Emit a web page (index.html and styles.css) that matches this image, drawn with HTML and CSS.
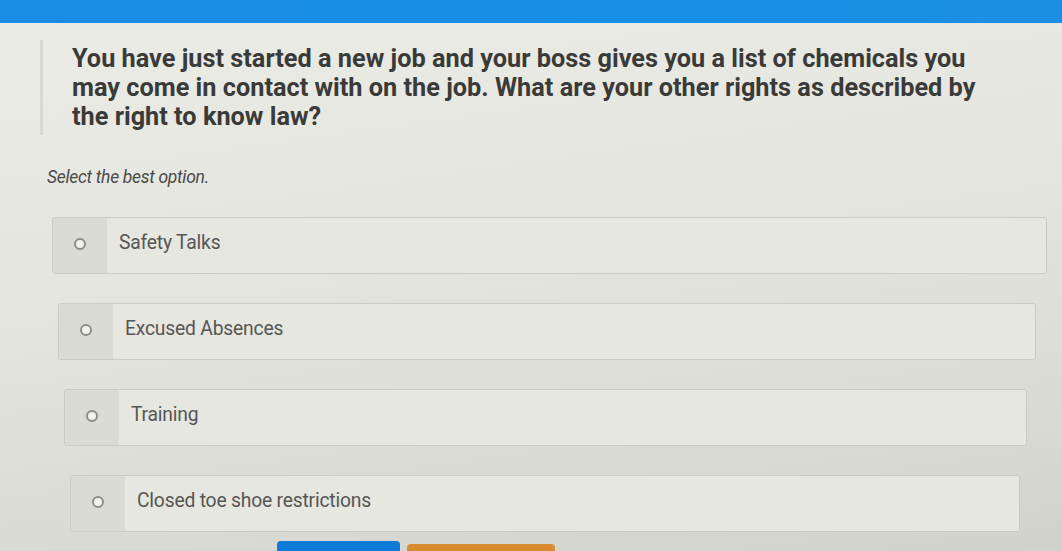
FILE: index.html
```html
<!DOCTYPE html>
<html lang="en">
<head>
<meta charset="utf-8">
<title>Right to know</title>
<link rel="stylesheet" href="styles.css">
</head>
<body>
<div class="topbar"></div>
<main class="content">
  <div class="question">You have just started a new job and your boss gives you a list of chemicals you may come in contact with on the job. What are your other rights as described by the right to know law?</div>
  <p class="hint">Select the best option.</p>
  <ul class="options">
    <li class="option"><span class="radio-cell"><span class="radio"></span></span><span class="label">Safety Talks</span></li>
    <li class="option"><span class="radio-cell"><span class="radio"></span></span><span class="label">Excused Absences</span></li>
    <li class="option"><span class="radio-cell"><span class="radio"></span></span><span class="label">Training</span></li>
    <li class="option"><span class="radio-cell"><span class="radio"></span></span><span class="label">Closed toe shoe restrictions</span></li>
  </ul>
  <div class="actions">
    <button class="btn btn-primary" type="button"></button>
    <button class="btn btn-secondary" type="button"></button>
  </div>
</main>
</body>
</html>
```

FILE: styles.css
```css
html, body {
  margin: 0;
  padding: 0;
  height: 100%;
  overflow: hidden;
}

body {
  font-family: Roboto, "Liberation Sans", Arial, sans-serif;
  background: linear-gradient(172deg, #ebece6 0%, #e4e5df 45%, #d8dad3 80%, #cfd1ca 100%);
  color: #333;
}

.topbar {
  height: 23px;
  background: linear-gradient(90deg, #1a8be2 0%, #1790e6 60%, #1b8fe3 100%);
}

.content {
  display: flex;
  flex-direction: column;
}

.question {
  width: 910px;
  margin: 17px 0 0 40px;
  padding: 4px 0 4px 29px;
  border-left: 3px solid #d6d8d1;
  font-size: 25.3px;
  font-weight: 700;
  line-height: 29px;
  color: #3a3a38;
}

.hint {
  margin: 31px 0 0 47px;
  font-size: 17.5px;
  font-style: italic;
  line-height: 22px;
  color: #4a4a48;
  letter-spacing: -0.3px;
}

.options {
  list-style: none;
  margin: 29px 0 0 0;
  padding: 0;
  display: flex;
  flex-direction: column;
  gap: 29px;
}

.option {
  display: flex;
  align-items: stretch;
  height: 57px;
  border: 1px solid #c9cbc4;
  border-radius: 3px;
  background: #e6e7e1;
  box-sizing: border-box;
}

.option:nth-child(1) { margin: 0 15px 0 52px; }
.option:nth-child(2) { margin: 0 26px 0 58px; }
.option:nth-child(3) { margin: 0 35px 0 64px; }
.option:nth-child(4) { margin: 0 42px 0 70px; }

.radio-cell {
  width: 54px;
  flex: none;
  background: #d9dbd4;
  display: flex;
  justify-content: center;
  padding-top: 20px;
  box-sizing: border-box;
  border-radius: 3px 0 0 3px;
}

.radio {
  width: 8px;
  height: 8px;
  border: 2px solid #8c8d89;
  border-radius: 50%;
  background: #f1f1ed;
}

.label {
  padding: 13px 0 0 12px;
  font-size: 19.3px;
  line-height: 24px;
  color: #565654;
  letter-spacing: -0.2px;
}

.actions {
  display: flex;
  gap: 7px;
  margin: 9px 0 0 277px;
}

.btn {
  border: none;
  height: 30px;
  border-radius: 4px;
  padding: 0;
}

.btn-primary {
  width: 123px;
  background: #0f7bd9;
}

.btn-secondary {
  width: 148px;
  margin-top: 3px;
  background: #d98b30;
}
```
